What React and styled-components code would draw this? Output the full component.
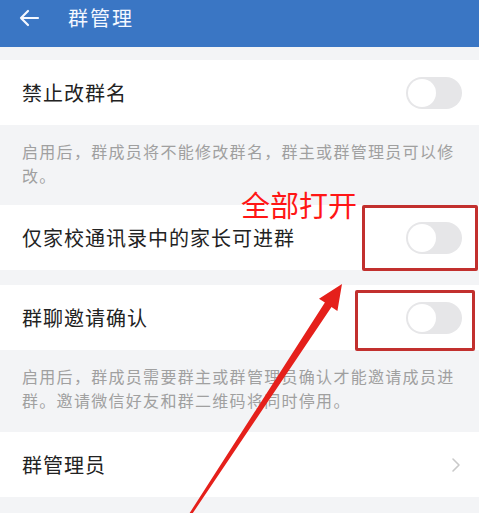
import React from "react";
import styled, { createGlobalStyle } from "styled-components";

const GlobalStyle = createGlobalStyle`
  html, body {
    margin: 0;
    padding: 0;
    background: #f3f4f6;
    font-family: "Noto Sans CJK SC", "Noto Sans", sans-serif;
  }
`;

const Page = styled.div`
  position: relative;
  width: 479px;
  height: 513px;
  overflow: hidden;
  background: #f3f4f6;
`;

const Header = styled.div`
  height: 47px;
  background: #3a76c4;
  display: flex;
  align-items: flex-start;
  padding: 6px 0 0 18px;
  box-sizing: border-box;
  color: #f4f8ff;
`;

const Back = styled.div`
  width: 22px;
  height: 22px;
  display: flex;
  align-items: center;
  margin-top: 1px;
`;

const Title = styled.div`
  margin-left: 28px;
  font-size: 20px;
  letter-spacing: 2px;
  line-height: 24px;
`;

const Gap = styled.div`
  height: ${(p) => p.h}px;
`;

const Row = styled.div`
  height: 65px;
  background: #fff;
  display: flex;
  align-items: center;
  justify-content: space-between;
  padding: 0 16px 0 22px;
`;

const Label = styled.div`
  font-size: 20px;
  letter-spacing: 1px;
  color: #222;
`;

const Desc = styled.div`
  height: ${(p) => p.h}px;
  box-sizing: border-box;
  padding: 14px 24px 0 22px;
  font-size: 16px;
  letter-spacing: 1.3px;
  line-height: 24px;
  color: #a0a0a0;
`;

const Toggle = styled.div`
  width: 56px;
  height: 32px;
  border-radius: 16px;
  background: #e6e6e8;
  position: relative;
  margin-right: 1px;
  &::after {
    content: "";
    position: absolute;
    left: 2px;
    top: 2px;
    width: 28px;
    height: 28px;
    border-radius: 50%;
    background: #fff;
  }
`;

const Chevron = styled.div`
  width: 10px;
  height: 16px;
  margin-right: 2px;
  display: flex;
`;

const Note = styled.div`
  position: absolute;
  left: 241px;
  top: 184px;
  font-size: 29px;
  color: #ff1616;
  line-height: 40px;
`;

const Frame = styled.div`
  position: absolute;
  left: ${(p) => p.x}px;
  top: ${(p) => p.y}px;
  width: ${(p) => p.w}px;
  height: ${(p) => p.h}px;
  box-sizing: border-box;
  border: 3px solid #c2302e;
  border-radius: 2px;
`;

const Overlay = styled.svg`
  position: absolute;
  left: 0;
  top: 0;
  pointer-events: none;
`;

export default function App() {
  return (
    <Page>
      <GlobalStyle />
      <Header>
        <Back>
          <svg width="22" height="22" viewBox="0 0 22 22" fill="none" stroke="#f4f8ff" strokeWidth="2.2" strokeLinecap="round" strokeLinejoin="round">
            <path d="M20 11H3M10 4l-7 7 7 7" />
          </svg>
        </Back>
        <Title>群管理</Title>
      </Header>
      <Gap h={13} />
      <Row>
        <Label>禁止改群名</Label>
        <Toggle />
      </Row>
      <Desc h={80}>启用后，群成员将不能修改群名，群主或群管理员可以修改。</Desc>
      <Row>
        <Label>仅家校通讯录中的家长可进群</Label>
        <Toggle />
      </Row>
      <Gap h={15} />
      <Row>
        <Label>群聊邀请确认</Label>
        <Toggle />
      </Row>
      <Desc h={82}>启用后，群成员需要群主或群管理员确认才能邀请成员进群。邀请微信好友和群二维码将同时停用。</Desc>
      <Row>
        <Label>群管理员</Label>
        <Chevron>
          <svg width="10" height="16" viewBox="0 0 10 16" fill="none" stroke="#c9c9c9" strokeWidth="1.6" strokeLinecap="round" strokeLinejoin="round">
            <path d="M2 2l6 6-6 6" />
          </svg>
        </Chevron>
      </Row>

      <Note>全部打开</Note>
      <Frame x={362} y={205} w={116} h={66} />
      <Frame x={355} y={290} w={120} h={61} />
      <Overlay width="479" height="513" viewBox="0 0 479 513">
        <polygon
          points="342,284 319,298.7 324.9,302.6 189,514 191.5,515 331.5,307 337.4,310.9"
          fill="#e5201b"
        />
      </Overlay>
    </Page>
  );
}
